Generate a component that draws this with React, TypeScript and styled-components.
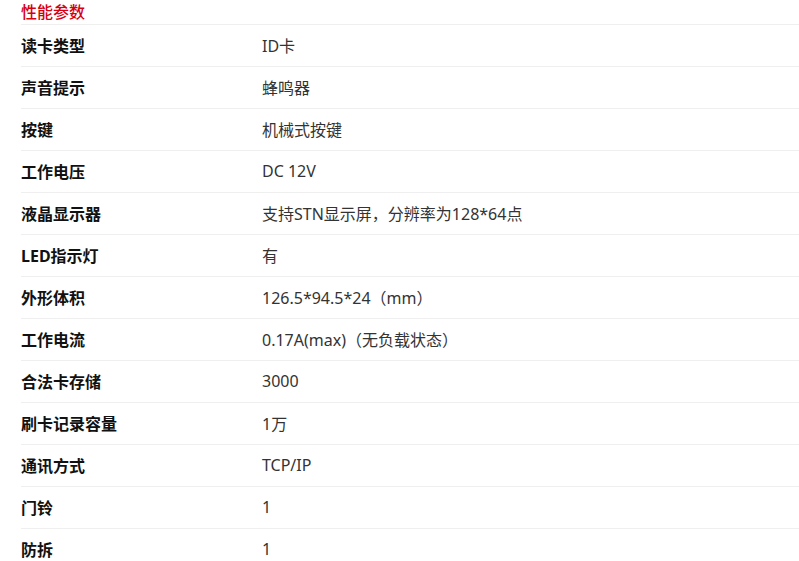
import * as React from 'react';
import styled, { createGlobalStyle } from 'styled-components';

const GlobalStyle = createGlobalStyle`
body {
    margin: 0;
    background: #fff;
    font-family: "Noto Sans", "Noto Sans CJK SC", sans-serif;
}
`

interface Spec {
    label: string
    value: string
}

const specs: Spec[] = [
    { label: '读卡类型', value: 'ID卡' },
    { label: '声音提示', value: '蜂鸣器' },
    { label: '按键', value: '机械式按键' },
    { label: '工作电压', value: 'DC 12V' },
    { label: '液晶显示器', value: '支持STN显示屏，分辨率为128*64点' },
    { label: 'LED指示灯', value: '有' },
    { label: '外形体积', value: '126.5*94.5*24（mm）' },
    { label: '工作电流', value: '0.17A(max)（无负载状态）' },
    { label: '合法卡存储', value: '3000' },
    { label: '刷卡记录容量', value: '1万' },
    { label: '通讯方式', value: 'TCP/IP' },
    { label: '门铃', value: '1' },
    { label: '防拆', value: '1' },
]

const App = () => {
    return (
        <Wrapper>
            <GlobalStyle />
            <Title>性能参数</Title>
            <SpecTable>
                {specs.map(spec => (
                    <SpecRow key={spec.label}>
                        <SpecLabel>{spec.label}</SpecLabel>
                        <SpecValue>{spec.value}</SpecValue>
                    </SpecRow>
                ))}
            </SpecTable>
        </Wrapper>
    )
}

const Wrapper = styled.div`
padding-left: 21px;
`

const Title = styled.h3`
margin: 0;
height: 25px;
line-height: 25px;
font-size: 16px;
font-weight: 500;
color: #d7000f;
border-bottom: 1px solid #efefef;
box-sizing: border-box;
`

const SpecTable = styled.div`
display: flex;
flex-direction: column;
`

const SpecRow = styled.div`
display: grid;
grid-template-columns: 241px 1fr;
align-items: center;
height: 42px;
padding-bottom: 2px;
border-bottom: 1px solid #efefef;
box-sizing: border-box;
`

const SpecLabel = styled.div`
font-size: 16px;
font-weight: bold;
color: #111;
`

const SpecValue = styled.div`
font-size: 16px;
color: #333;
`

export default App;
